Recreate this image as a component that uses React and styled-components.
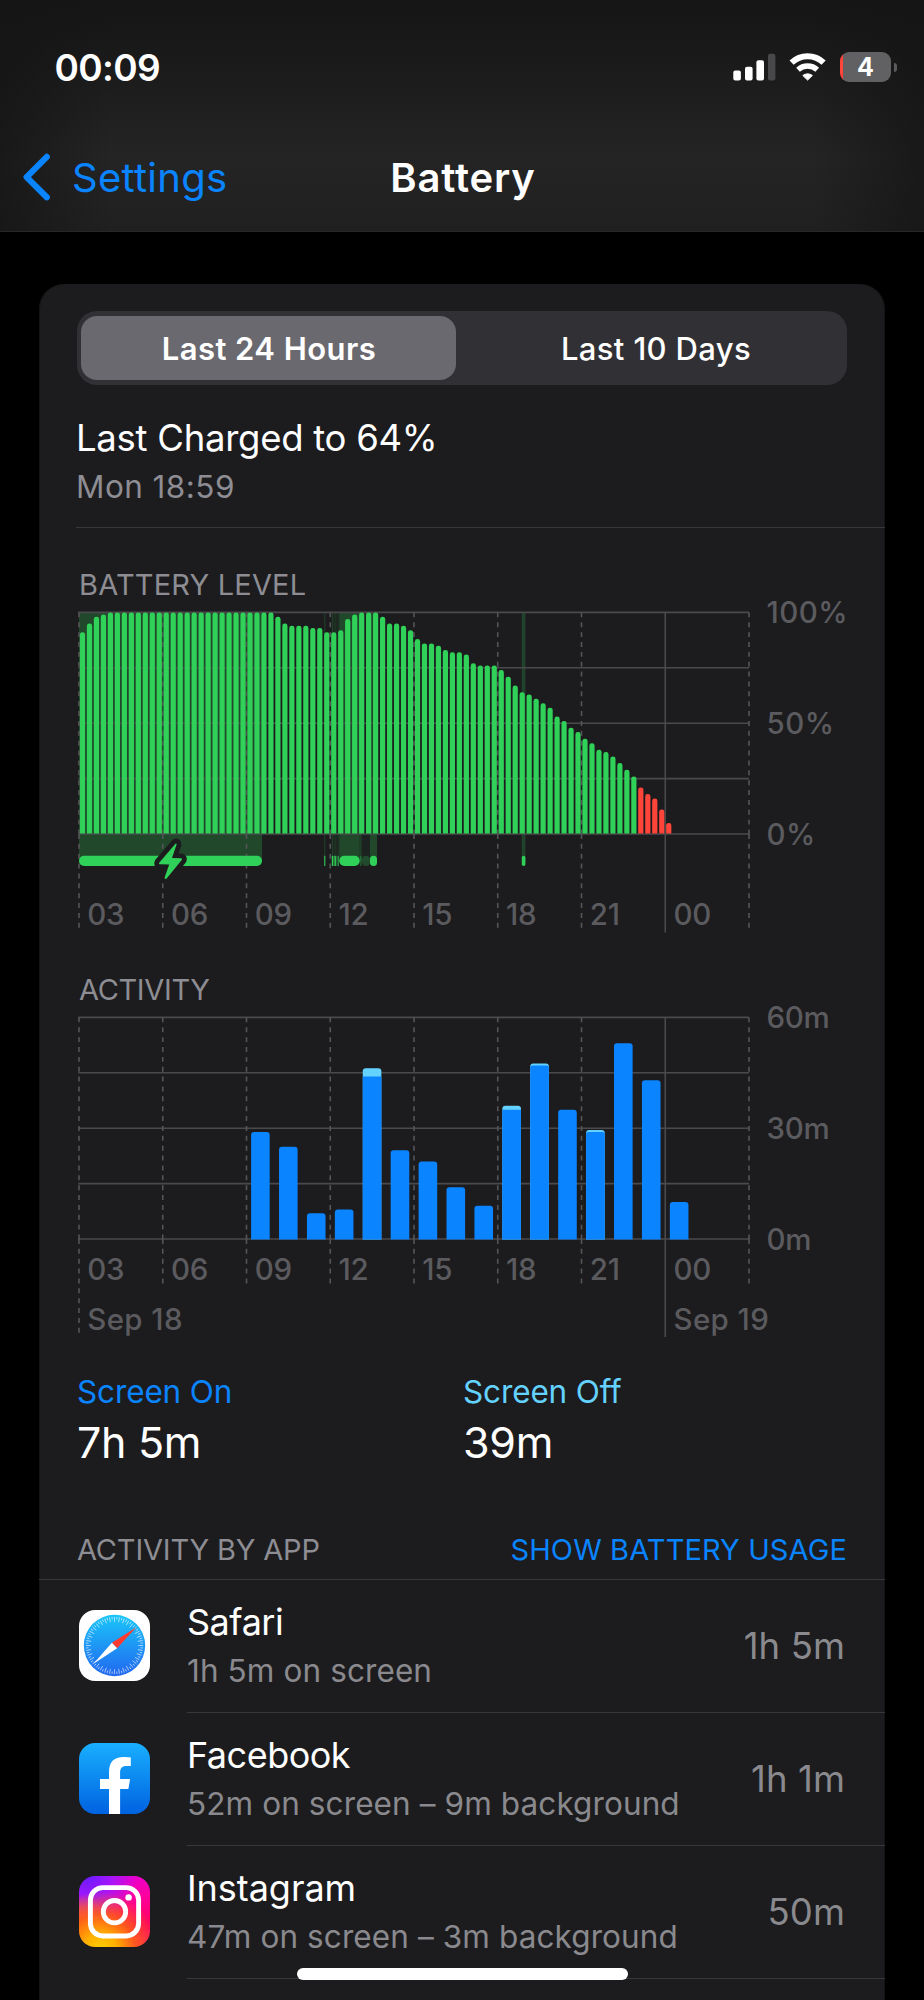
import React from 'react'
import styled, { createGlobalStyle } from 'styled-components'

const colors = {
	blue: '#0a84ff',
	cyan: '#64d2ff',
	green: '#30d158',
	red: '#ff453a',
	card: '#1c1c1e',
	grid: '#4a4a4c',
	axisText: '#5b5b5f',
	muted: '#8d8d93',
	separator: '#38383a',
}

// battery level in percent, one sample every 15 minutes from 03:00
const levels = [
	91, 95, 98, 99, ...Array(24).fill(100), 98, 95, 94, 94, 94, 93, 93, 91, 91, 92, 97, 99, 100,
	100, 100, 98, 95, 95, 94, 92, 88, 86, 86, 85, 83, 82, 82, 81, 77, 76, 76, 76, 74, 71, 67, 64,
	63, 61, 59, 57, 53, 51, 48, 46, 43, 41, 38, 37, 35, 32, 29, 26, 21, 18, 16, 11, 5,
]

// minutes of use per hour from 09:00
const activity = [
	{ on: 29 },
	{ on: 25 },
	{ on: 7 },
	{ on: 8 },
	{ on: 44, off: 2.2 },
	{ on: 24 },
	{ on: 21 },
	{ on: 14 },
	{ on: 9 },
	{ on: 35, off: 1.1 },
	{ on: 47, off: 0.5 },
	{ on: 35 },
	{ on: 29, off: 0.5 },
	{ on: 53 },
	{ on: 43 },
	{ on: 10 },
]

// charging periods: left edge, width, opacity of the band, opacity of the marker
const charges = [
	[2, 183, 1, 1],
	[247, 1.4, 0.6, 0.75],
	[254.8, 1.6, 0.8, 1],
	[257.4, 1.5, 0.6, 1],
	[259.6, 0.8, 0.7, 0.8],
	[261, 0.9, 0.5, 0.7],
	[262.3, 20.4, 1, 1],
	[282.7, 2, 0.8, 0.3],
	[285, 8, 0.15, 0.25],
	[293, 7, 1, 1],
	[444.8, 3.6, 0.9, 1],
]

const hours = ['03', '06', '09', '12', '15', '18', '21', '00']

const LEFT = 2
const STEP = 83.75
const TOP = 12.4
const PLOT = 221.6

const lineX = (i) => LEFT + i * STEP

const Grid = ({ yLabels, labelY, dashEnd, firstEnd, solidEnd }) => (
	<g>
		{[0, 1, 2, 3, 4].map((i) => (
			<line
				key={i}
				x1={LEFT - 0.7}
				x2={lineX(8)}
				y1={TOP + (PLOT / 4) * i}
				y2={TOP + (PLOT / 4) * i}
				stroke={colors.grid}
				strokeWidth='1.6'
			/>
		))}
		{[...hours, ''].map((hour, i) => {
			const x = lineX(i)
			const base = TOP + PLOT
			return (
				<g key={i}>
					{i === 7 ? (
						<path d={`M${x} ${TOP}V${solidEnd}`} stroke={colors.grid} strokeWidth='1.6' />
					) : (
						// the dashes start again below the zero line
						<path
							d={`M${x} ${TOP}V${base}M${x} ${base}V${i === 0 ? firstEnd : dashEnd}`}
							stroke='#555557'
							strokeWidth='1.6'
							strokeDasharray='4.95 4.92'
						/>
					)}
					{hour && (
						<AxisText x={x + 8.2} y={labelY} $track='-0.2px'>
							{hour}
						</AxisText>
					)}
				</g>
			)
		})}
		{yLabels.map((label, i) => (
			<AxisText
				key={label}
				x={689.4}
				y={TOP + 10.6 + (PLOT / 2) * i}
				$track={label.endsWith('m') ? '-0.2px' : '0.55px'}
			>
				{label}
			</AxisText>
		))}
	</g>
)

const topRounded = (x, y, w, bottom, r) =>
	`M${x} ${bottom}V${y + r}a${r} ${r} 0 0 1 ${r} ${-r}h${w - 2 * r}a${r} ${r} 0 0 1 ${r} ${r}V${bottom}z`

const BatteryChart = () => {
	const bottom = TOP + PLOT
	const pitch = STEP / 12
	return (
		<ChartSvg width='808' height='340' viewBox='0 0 808 340'>
			{charges.map(([x, w, band]) => (
				<rect key={x} x={x} y={TOP} width={w} height={249} fill='#22482c' opacity={band} />
			))}
			<Grid
				yLabels={['100%', '50%', '0%']}
				labelY={324.8}
				dashEnd={328.2}
				firstEnd={328.2}
				solidEnd={332.5}
			/>
			{levels.map((level, i) => (
				<path
					key={i}
					d={topRounded(
						LEFT + pitch * i + 0.9,
						bottom - (PLOT * level) / 100,
						5.2,
						bottom - 0.4,
						2.4
					)}
					fill={level <= 21 ? colors.red : colors.green}
				/>
			))}
			{charges.map(([x, w, , mark]) => (
				<rect
					key={x}
					x={x}
					y='255.8'
					width={w}
					height='10.2'
					rx={w > 3 ? Math.min(5, w / 2) : 0}
					fill={colors.green}
					opacity={mark}
				/>
			))}
			<path
				d='M98.7 243.6 82.2 262.7Q81.4 264.2 83 264.3L92.2 264.6 87.6 277.6Q87.8 279.8 89.6 278.4L104.9 259.8Q105.5 258.4 104.2 258.3L95 258 99.6 244.6Q99.8 242.9 98.7 243.6z'
				fill={colors.green}
				stroke={colors.card}
				strokeWidth='9.6'
				strokeLinejoin='round'
				paintOrder='stroke'
			/>
		</ChartSvg>
	)
}

const ActivityChart = () => {
	const bottom = TOP + PLOT
	const minute = PLOT / 60
	return (
		<ChartSvg width='808' height='340' viewBox='0 0 808 340'>
			<Grid
				yLabels={['60m', '30m', '0m']}
				labelY={275}
				dashEnd={278.6}
				firstEnd={328.2}
				solidEnd={332}
			/>
			<AxisText x={lineX(0) + 8.2} y={325} $track='0.4px'>
				Sep 18
			</AxisText>
			<AxisText x={lineX(7) + 8.2} y={325} $track='0.4px'>
				Sep 19
			</AxisText>
			{activity.map(({ on, off = 0 }, i) => {
				const x = lineX(2) + 4.6 + (STEP / 3) * i
				const top = bottom - (on + off) * minute
				return (
					<g key={i}>
						<path
							d={topRounded(x, top, 18.6, bottom + 0.4, 3)}
							fill={off ? colors.cyan : colors.blue}
						/>
						{off > 0 && (
							<path
								d={topRounded(x, top + off * minute, 18.6, bottom + 0.4, off < 1 ? 2 : 0)}
								fill={colors.blue}
							/>
						)}
					</g>
				)
			})}
		</ChartSvg>
	)
}

const SignalIcon = () => (
	<svg width='43' height='28' viewBox='0 0 43 28'>
		<rect x='0.3' y='17.4' width='7.6' height='10' rx='2' fill='#fff' />
		<rect x='12' y='13.7' width='7.6' height='13.7' rx='2' fill='#fff' />
		<rect x='23.4' y='7.2' width='7.6' height='20.2' rx='2' fill='#fff' />
		<rect x='35' y='0.8' width='7.4' height='26.6' rx='2' fill='#48484a' />
	</svg>
)

const WifiIcon = () => (
	<svg width='38' height='28' viewBox='0 0 38 28'>
		<path d='M2.6 9.7A23.2 23.2 0 0 1 34.6 9.7' fill='none' stroke='#fff' strokeWidth='6' />
		<path d='M9 16.7A14.2 14.2 0 0 1 28.2 16.7' fill='none' stroke='#fff' strokeWidth='5.4' />
		<path
			d='M13.8 22.5A8.4 8.4 0 0 1 23.4 22.5L18.6 27.1z'
			fill='#fff'
			stroke='#fff'
			strokeWidth='1'
			strokeLinejoin='round'
		/>
	</svg>
)

const SafariIcon = () => (
	<AppIcon viewBox='0 0 71 71' $bg='#fff'>
		<defs>
			<linearGradient id='safari' x1='0' y1='0' x2='0' y2='1'>
				<stop offset='0' stopColor='#1bc6f9' />
				<stop offset='1' stopColor='#2167f0' />
			</linearGradient>
		</defs>
		<circle cx='35.5' cy='35.5' r='30.7' fill='url(#safari)' />
		{Array.from({ length: 72 }, (_, i) => (
			<line
				key={i}
				x1='35.5'
				x2='35.5'
				y1='6.8'
				y2={i % 2 ? 9.4 : 11.8}
				stroke='#fff'
				strokeOpacity='0.8'
				strokeWidth='0.7'
				transform={`rotate(${i * 5} 35.5 35.5)`}
			/>
		))}
		<path d='M57.4 17.2 32.9 32.7 38.1 38.3z' fill='#ff3b30' />
		<path d='M14.2 54 32.9 32.7 38.1 38.3z' fill='#fff' />
	</AppIcon>
)

const FacebookIcon = () => (
	<AppIcon viewBox='0 0 71 71' $bg='linear-gradient(#19afff, #0062e0)'>
		<path
			d='M30 71V46h-9V36h9v-6.4C30 19 34.6 14 44.8 14c2.7 0 5.4.2 7 .5V23h-4.2c-5 0-6.5 2.2-6.5 7v6h10l-1.7 10h-8.3v25z'
			fill='#fff'
		/>
	</AppIcon>
)

const instagramBg = `
	radial-gradient(circle at 30% 104%, #ffd000 0, #ffb000 18%, rgba(255, 96, 20, 0.85) 40%, rgba(255, 40, 80, 0) 66%),
	radial-gradient(circle at 0 70%, #ff6a1a 0, rgba(255, 60, 60, 0) 36%),
	radial-gradient(circle at 12% 0, #6a1cff 0, #a316fb 24%, rgba(220, 10, 235, 0) 52%),
	radial-gradient(circle at 0 38%, #dd18fa 0, rgba(240, 0, 200, 0) 34%),
	linear-gradient(170deg, #e800d6 8%, #ff0096 42%, #ff0060 72%, #ff1f6a 100%)
`

const InstagramIcon = () => (
	<AppIcon viewBox='0 0 71 71' $bg={instagramBg}>
		<g fill='none' stroke='#fff' strokeWidth='4.9'>
			<rect x='11.4' y='11.6' width='48.2' height='48.4' rx='12.5' />
			<circle cx='35.5' cy='35.7' r='11.2' />
		</g>
		<circle cx='49.6' cy='21.4' r='3.2' fill='#fff' />
	</AppIcon>
)

const apps = [
	{ name: 'Safari', track: '-0.48px', detail: '1h 5m on screen', total: '1h 5m', Icon: SafariIcon },
	{
		name: 'Facebook',
		track: '-0.5px',
		detail: '52m on screen – 9m background',
		total: '1h 1m',
		Icon: FacebookIcon,
	},
	{
		name: 'Instagram',
		track: '-0.05px',
		detail: '47m on screen – 3m background',
		total: '50m',
		Icon: InstagramIcon,
	},
]

const App = () => {
	return (
		<Screen>
			<GlobalStyle />
			<Header>
				<StatusBar>
					<Clock>00:09</Clock>
					<StatusIcons>
						<SignalIcon />
						<WifiIcon />
						<BatteryBadge>
							<BatteryBody>4</BatteryBody>
							<BatteryNub />
						</BatteryBadge>
					</StatusIcons>
				</StatusBar>
				<NavBar>
					<BackLink>
						<svg width='30' height='50' viewBox='0 0 30 50'>
							<path
								d='M25.8 3.9 5.6 24.1 25.8 44.3'
								fill='none'
								stroke='currentColor'
								strokeWidth='6.2'
								strokeLinecap='round'
								strokeLinejoin='round'
							/>
						</svg>
						Settings
					</BackLink>
					<NavTitle>Battery</NavTitle>
				</NavBar>
			</Header>

			<Card>
				<Segmented>
					<Segment $active>Last 24 Hours</Segment>
					<Segment>Last 10 Days</Segment>
				</Segmented>

				<LastCharge>
					<h2>Last Charged to 64%</h2>
					<p>Mon 18:59</p>
				</LastCharge>

				<ChartSection>
					<ChartTitle $track='0.19px'>BATTERY LEVEL</ChartTitle>
					<BatteryChart />
				</ChartSection>
				<ChartSection>
					<ChartTitle $track='-0.35px'>ACTIVITY</ChartTitle>
					<ActivityChart />
				</ChartSection>

				<Totals>
					<Total $color={colors.blue}>
						<span>Screen On</span>
						<strong>7h 5m</strong>
					</Total>
					<Total $color={colors.cyan}>
						<span>Screen Off</span>
						<strong>39m</strong>
					</Total>
				</Totals>

				<ListHeader>
					<span>ACTIVITY BY APP</span>
					<button>SHOW BATTERY USAGE</button>
				</ListHeader>
				{apps.map(({ name, track, detail, total, Icon }) => (
					<AppRow key={name}>
						<Icon />
						<AppBody>
							<AppText>
								<AppName $track={track}>{name}</AppName>
								<AppDetail>{detail}</AppDetail>
							</AppText>
							<AppTotal>{total}</AppTotal>
						</AppBody>
					</AppRow>
				))}
			</Card>
			<HomeIndicator />
		</Screen>
	)
}

const GlobalStyle = createGlobalStyle`
	* {
		box-sizing: border-box;
		margin: 0;
		padding: 0;
	}

	body {
		background: #000;
		font-family: Inter, 'Liberation Sans', sans-serif;
	}

	svg {
		display: block;
		flex-shrink: 0;
	}
`

const Screen = styled.div`
	position: relative;
	width: 924px;
	height: 2000px;
	overflow: hidden;
	background: #000;
	color: #fff;
`

const Header = styled.header`
	height: 232px;
	padding-top: 45px;
	border-bottom: 1px solid #272728;
	background:
		linear-gradient(90deg, rgba(20, 20, 20, 0.7), rgba(20, 20, 20, 0) 12%, rgba(20, 20, 20, 0) 88%, rgba(20, 20, 20, 0.7)),
		linear-gradient(#151515, #1b1b1b 30%, #242424 68%, #202020);
`

const StatusBar = styled.div`
	display: flex;
	justify-content: space-between;
	align-items: center;
	height: 44px;
	padding: 0 27px 0 54.5px;
`

const Clock = styled.time`
	padding-top: 1px;
	font-size: 37px;
	font-weight: 600;
	line-height: 44px;
	letter-spacing: -0.63px;
`

const StatusIcons = styled.div`
	display: flex;
	align-items: center;
	gap: 13px;
`

const BatteryBadge = styled.div`
	display: flex;
	align-items: center;
	gap: 3px;
`

const BatteryBody = styled.div`
	width: 51px;
	height: 30px;
	border-radius: 9px;
	background: linear-gradient(90deg, ${colors.red} 2.8px, #616163 2.8px);
	font-size: 25px;
	font-weight: 700;
	line-height: 30px;
	text-align: center;
`

const BatteryNub = styled.div`
	width: 3px;
	height: 9px;
	border-radius: 0 3px 3px 0;
	background: #5a5a5c;
`

const NavBar = styled.nav`
	display: grid;
	grid-template-columns: 1fr auto 1fr;
	padding: 64px 0 0 21px;
	line-height: 50px;
	font-size: 40px;
`

const BackLink = styled.a`
	display: flex;
	gap: 21px;
	color: ${colors.blue};
	letter-spacing: 0.28px;
`

const NavTitle = styled.h1`
	margin-left: -19px;
	font-size: 40px;
	font-weight: 600;
	letter-spacing: 0.82px;
`

const Card = styled.main`
	width: 846px;
	height: 1750px;
	margin: 52px 0 0 39px;
	padding-top: 27px;
	border-radius: 25px 25px 0 0;
	background: ${colors.card};
	box-shadow:
		inset 1px 0 #131314,
		inset -1px 0 #131314;
`

const Segmented = styled.div`
	display: grid;
	grid-template-columns: 1fr 1fr;
	gap: 12px;
	width: 770px;
	height: 74px;
	margin-left: 38px;
	padding: 5px 4px;
	border-radius: 20px;
	background: #313135;
`

const Segment = styled.div`
	padding: 1px 0 0 1px;
	border-radius: 16px;
	background: ${({ $active }) => ($active ? '#6a696f' : 'transparent')};
	font-size: 31px;
	font-weight: ${({ $active }) => ($active ? 600 : 500)};
	line-height: 63px;
	letter-spacing: ${({ $active }) => ($active ? '0.45px' : '0.35px')};
	text-align: center;
`

const LastCharge = styled.section`
	height: 143px;
	margin-left: 37px;
	padding-top: 31px;
	border-bottom: 1px solid ${colors.separator};

	h2 {
		font-size: 36.5px;
		font-weight: 400;
		line-height: 44px;
		letter-spacing: -0.27px;
	}

	p {
		margin-top: 8px;
		color: ${colors.muted};
		font-size: 31.5px;
		line-height: 38px;
		letter-spacing: 0.45px;
	}
`

const ChartSection = styled.section`
	height: 405px;
	padding: 39px 0 0 38px;
`

const ChartTitle = styled.h3`
	margin-left: 2px;
	color: ${colors.muted};
	font-size: 29px;
	font-weight: 400;
	line-height: 36px;
	letter-spacing: ${({ $track }) => $track};
`

const ChartSvg = styled.svg`
	margin-top: -3px;
`

const AxisText = styled.text`
	fill: ${colors.axisText};
	font-size: 29.5px;
	font-weight: 500;
	letter-spacing: ${({ $track }) => $track};
`

const Totals = styled.section`
	display: grid;
	grid-template-columns: 1fr 1fr;
	height: 158px;
	padding: 35px 36px 0 38px;
`

const Total = styled.div`
	display: flex;
	flex-direction: column;
	gap: 5px;

	span {
		color: ${({ $color }) => $color};
		font-size: 31.5px;
		line-height: 38px;
		letter-spacing: -0.13px;
	}

	strong {
		font-size: 43px;
		font-weight: 400;
		line-height: 52px;
		letter-spacing: -0.3px;
	}
`

const ListHeader = styled.div`
	display: flex;
	justify-content: space-between;
	height: 84px;
	padding: 36px 38px 0;
	border-bottom: 1px solid ${colors.separator};
	color: ${colors.muted};
	font-size: 29px;
	line-height: 36px;
	letter-spacing: -0.18px;

	button {
		align-self: flex-start;
		border: none;
		background: none;
		color: ${colors.blue};
		font: inherit;
		letter-spacing: 0.11px;
	}
`

const AppRow = styled.div`
	display: flex;
	height: 133px;
	padding-left: 40px;
`

const AppIcon = styled.svg`
	width: 71px;
	height: 71px;
	margin-top: 30px;
	border-radius: 16px;
	background: ${({ $bg }) => $bg};
`

const AppBody = styled.div`
	display: flex;
	flex: 1;
	justify-content: space-between;
	margin-left: 37px;
	padding-right: 40px;
	border-bottom: 1px solid ${colors.separator};
`

const AppText = styled.div`
	padding-top: 20px;
`

const AppName = styled.h4`
	font-size: 36px;
	font-weight: 400;
	line-height: 44px;
	letter-spacing: ${({ $track }) => $track};
`

const AppDetail = styled.p`
	margin-top: 8px;
	color: #8a8a8e;
	font-size: 31.5px;
	line-height: 38px;
	letter-spacing: 0.1px;
`

const AppTotal = styled.span`
	padding-top: 44px;
	color: #8a8a8e;
	font-size: 36.5px;
	line-height: 44px;
	letter-spacing: 0.1px;
`

const HomeIndicator = styled.div`
	position: absolute;
	left: 297px;
	bottom: 20px;
	width: 331px;
	height: 12px;
	border-radius: 6px;
	background: #fff;
`

export default App
